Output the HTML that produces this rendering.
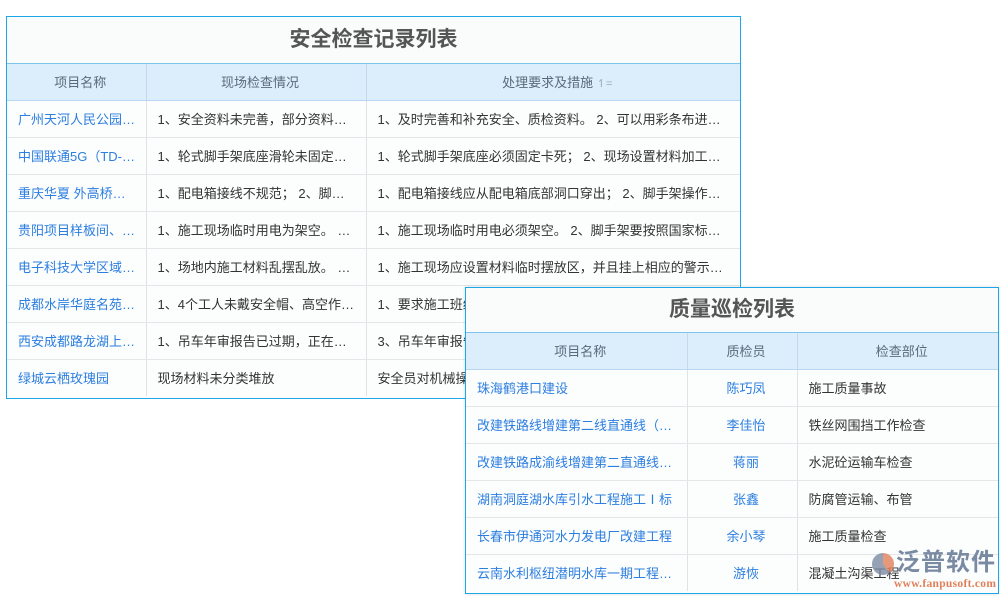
<!DOCTYPE html>
<html><head><meta charset="utf-8"><style>
*{margin:0;padding:0;box-sizing:border-box}
body{width:1000px;height:600px;background:#fff;position:relative;overflow:hidden;font-family:"Liberation Sans","Noto Sans CJK SC",sans-serif;font-size:13px;color:#333}
.t{position:absolute;border:1px solid #1ea7e8;background:#fcfdfd}
.title{text-align:center;font-weight:bold;font-size:21px;color:#555;background:#fafcfc;border-bottom:1px solid #7fc4ec}
table{border-collapse:collapse;width:100%;table-layout:fixed}
td,th{border-right:1px solid #dde3e8;border-bottom:1px solid #e4e7ea;height:37px;white-space:nowrap;overflow:hidden;text-overflow:ellipsis;padding:0 3px 0 11px}
td:last-child,th:last-child{border-right:none}
th{background:#dcedfb;font-weight:normal;color:#5a6a7a;border-right-color:#c5d9ea;border-bottom:1px solid #b8d7f0;height:36px}
td.l{color:#2c7ee0}
tr:last-child td{border-bottom:none}
.c{text-align:center}
</style></head><body>
<div class="t" style="left:6px;top:16px;width:735px;height:383px">
<div class="title" style="height:47px;line-height:46px">安全检查记录列表</div>
<table>
<colgroup><col style="width:139px"><col style="width:220px"><col></colgroup>
<tr><th>项目名称</th><th>现场检查情况</th><th>处理要求及措施 <span style="color:#9ab;font-size:11px">↿=</span></th></tr>
<tr><td class="l">广州天河人民公园…</td><td>1、安全资料未完善，部分资料…</td><td>1、及时完善和补充安全、质检资料。 2、可以用彩条布进…</td></tr>
<tr><td class="l">中国联通5G（TD-…</td><td>1、轮式脚手架底座滑轮未固定…</td><td>1、轮式脚手架底座必须固定卡死； 2、现场设置材料加工…</td></tr>
<tr><td class="l">重庆华夏 外高桥…</td><td>1、配电箱接线不规范； 2、脚…</td><td>1、配电箱接线应从配电箱底部洞口穿出； 2、脚手架操作…</td></tr>
<tr><td class="l">贵阳项目样板间、…</td><td>1、施工现场临时用电为架空。 …</td><td>1、施工现场临时用电必须架空。 2、脚手架要按照国家标…</td></tr>
<tr><td class="l">电子科技大学区域…</td><td>1、场地内施工材料乱摆乱放。 …</td><td>1、施工现场应设置材料临时摆放区，并且挂上相应的警示…</td></tr>
<tr><td class="l">成都水岸华庭名苑…</td><td>1、4个工人未戴安全帽、高空作…</td><td>1、要求施工班组…</td></tr>
<tr><td class="l">西安成都路龙湖上…</td><td>1、吊车年审报告已过期，正在…</td><td>3、吊车年审报告…</td></tr>
<tr><td class="l">绿城云栖玫瑰园</td><td>现场材料未分类堆放</td><td>安全员对机械操…</td></tr>
</table></div>
<div class="t" style="left:465px;top:287px;width:534px;height:307px;box-shadow:0 0 3px rgba(0,0,0,.15)">
<div class="title" style="height:45px;line-height:44px">质量巡检列表</div>
<table>
<colgroup><col style="width:221px"><col style="width:110px"><col></colgroup>
<tr><th>项目名称</th><th>质检员</th><th>检查部位</th></tr>
<tr><td class="l">珠海鹤港口建设</td><td class="l c">陈巧凤</td><td>施工质量事故</td></tr>
<tr><td class="l">改建铁路线增建第二线直通线（…</td><td class="l c">李佳怡</td><td>铁丝网围挡工作检查</td></tr>
<tr><td class="l">改建铁路成渝线增建第二直通线…</td><td class="l c">蒋丽</td><td>水泥砼运输车检查</td></tr>
<tr><td class="l">湖南洞庭湖水库引水工程施工Ⅰ标</td><td class="l c">张鑫</td><td>防腐管运输、布管</td></tr>
<tr><td class="l">长春市伊通河水力发电厂改建工程</td><td class="l c">余小琴</td><td>施工质量检查</td></tr>
<tr><td class="l">云南水利枢纽潜明水库一期工程…</td><td class="l c">游恢</td><td>混凝土沟渠工程</td></tr>
</table></div>
<div style="position:absolute;left:872px;top:553px;width:22px;height:22px;border-radius:50%;background:conic-gradient(#e0805a 0 40%,#7b8aa3 40% 100%);opacity:.8"></div>
<div style="position:absolute;left:896px;top:548px;font-size:24px;line-height:30px;color:#7a8aa3;font-weight:bold;letter-spacing:1px">泛普软件</div>
<div style="position:absolute;left:894px;top:578px;font-size:11.5px;line-height:13px;color:#e0805a;font-family:'Liberation Serif',serif;font-weight:bold;letter-spacing:.3px">www.fanpusoft.com</div>
</body></html>
